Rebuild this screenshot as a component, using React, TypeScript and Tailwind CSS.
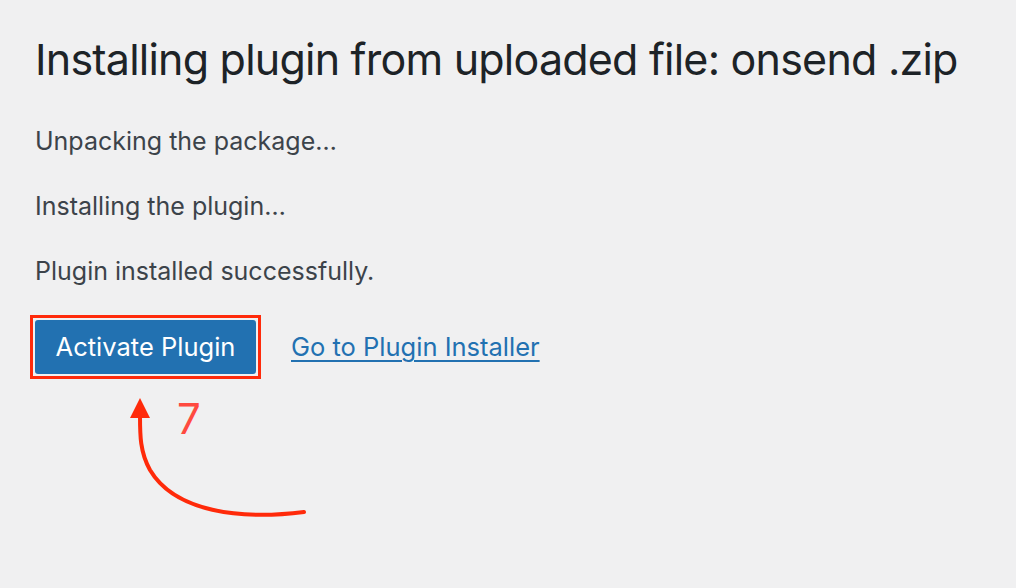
import React from "react";

export default function App() {
  return (
    <div className="relative w-[1016px] h-[588px] bg-[#f0f0f1] overflow-hidden" style={{ fontFamily: "Inter, 'Noto Sans', sans-serif" }}>
      <div className="pl-[35px] pt-[33px]">
        <h1 className="text-[43px] leading-[52px] text-[#1d2327] font-normal tracking-[-0.78px] whitespace-nowrap">
          Installing plugin from uploaded file: onsend .zip
        </h1>
        <div className="flex flex-col gap-[39px] mt-[43px] text-[25px] leading-[26px] text-[#3c434a]">
          <p>Unpacking the package…</p>
          <p>Installing the plugin…</p>
          <p>Plugin installed successfully.</p>
        </div>
        <div className="flex items-center gap-[30px] mt-[31px] -ml-[5px]">
          <div className="border-[3px] border-[#ff2a0a] p-[2px]">
            <button className="bg-[#2271b1] text-white text-[25.5px] h-[54px] w-[221px] rounded-[3px]">
              Activate Plugin
            </button>
          </div>
          <a href="#" className="text-[#2271b1] text-[25.5px] underline underline-offset-[4px] decoration-[2px]">
            Go to Plugin Installer
          </a>
        </div>
      </div>
      <div className="absolute left-[177px] top-[398px] text-[42px] leading-none text-[#ff4a40]">7</div>
      <svg className="absolute left-0 top-0" width="1016" height="588" viewBox="0 0 1016 588">
        <path d="M304 512 C 240 520, 175 512, 150 470 C 140 452, 140 435, 140 416" fill="none" stroke="#ff2a0a" strokeWidth="4" strokeLinecap="round" />
        <path d="M130 418 L140 398 L150 418 Z" fill="#ff2a0a" />
      </svg>
    </div>
  );
}
